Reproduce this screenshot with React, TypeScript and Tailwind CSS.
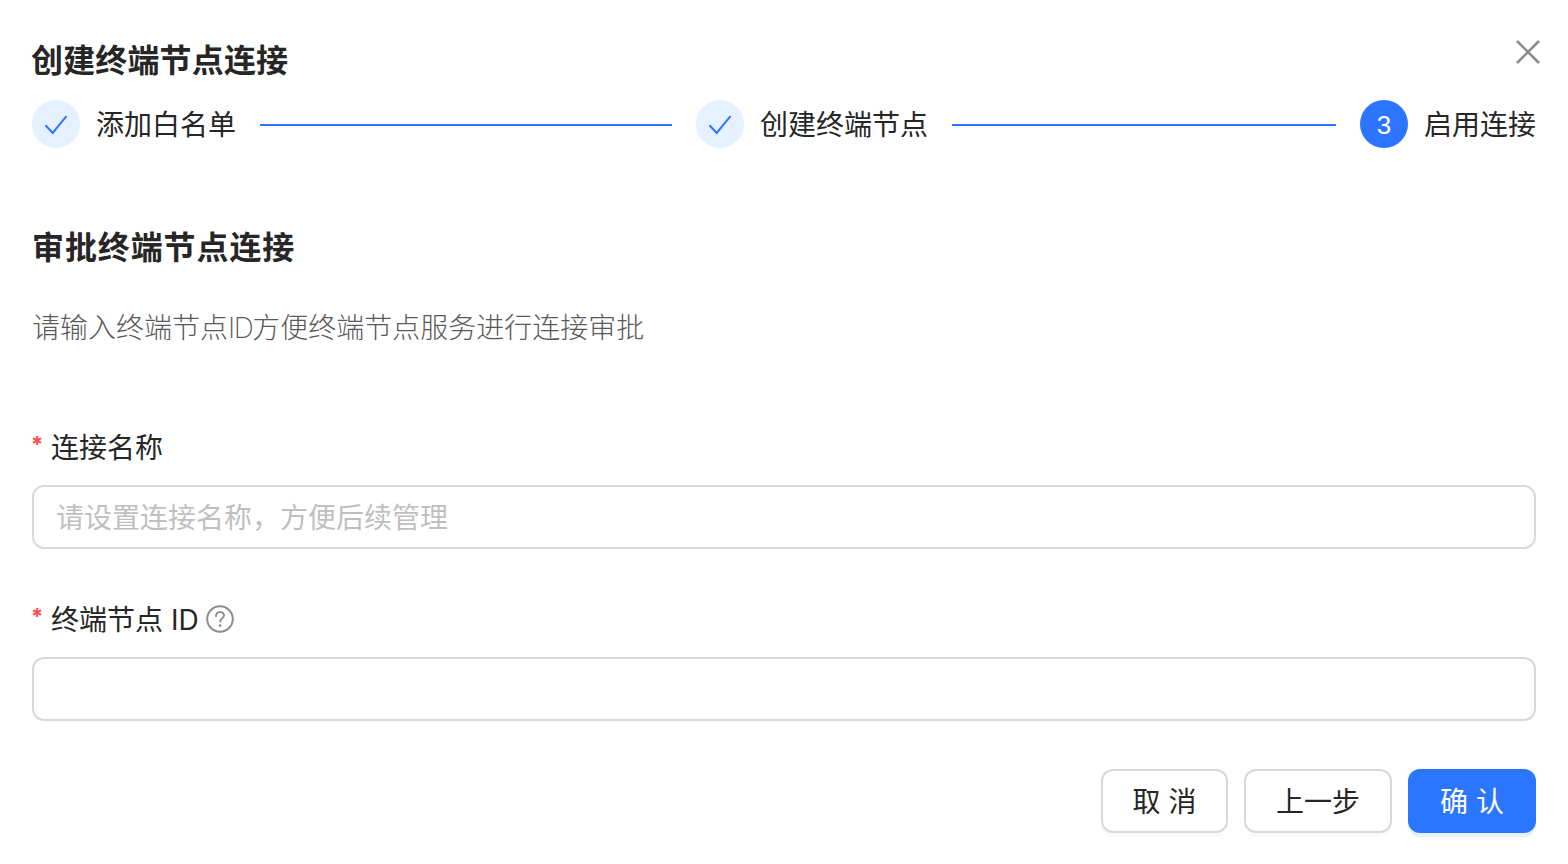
function Step({ label, done, num, last }: { label: string; done?: boolean; num?: number; last?: boolean }) {
  return (
    <div className={last ? "flex items-center" : "flex flex-1 items-center mr-6"}>
      <div
        className={
          done
            ? "w-12 h-12 rounded-full bg-[#e6f1ff]"
            : "w-12 h-12 rounded-full bg-[#2b75ff] flex items-center justify-center pt-0.5 text-white text-[26px] font-['Liberation_Sans',sans-serif]"
        }
      >
        {done ? (
          <svg width="48" height="48" viewBox="0 0 48 48" fill="none">
            <path d="M13.5 25.2 20.7 33 34.5 16.2" stroke="#2b75ff" strokeWidth="2" />
          </svg>
        ) : (
          num
        )}
      </div>
      <span className="ml-4 text-[28px] leading-[48px] pt-px text-[#262626] whitespace-nowrap">{label}</span>
      {!last && <div className="flex-1 h-0.5 mt-0.5 bg-[#2b75ff] ml-6" />}
    </div>
  );
}

function Field({ label, placeholder, help }: { label: string; placeholder?: string; help?: boolean }) {
  return (
    <div>
      <div className="flex items-center h-10 mb-[17px]">
        <span className="w-[19px] -ml-px mr-px text-[22px] leading-none text-[#ff4d4f] -mt-2 font-bold">*</span>
        <span className="text-[28px] leading-10 text-[#262626]">{label}</span>
        {help && (
          <svg width="28" height="28" viewBox="0 0 28 28" fill="none" className="ml-2 -translate-x-px -translate-y-px">
            <circle cx="14" cy="14" r="12.8" stroke="#8c8c8c" strokeWidth="2" />
            <path d="M10 11.2c0-2.4 1.8-4 4.1-4 2.2 0 3.9 1.4 3.9 3.4 0 2.8-3.9 3-3.9 5.9" stroke="#8c8c8c" strokeWidth="1.8" strokeLinecap="round" />
            <circle cx="14.1" cy="20.6" r="1.3" fill="#8c8c8c" />
          </svg>
        )}
      </div>
      <input
        placeholder={placeholder}
        className="block w-full h-16 rounded-xl border-2 border-[#d9d9d9] px-[22px] pt-0.5 text-[28px] outline-none placeholder:text-[#bfbfbf] bg-white"
      />
    </div>
  );
}

export default function App() {
  return (
    <div className="relative w-[1568px] h-[864px] bg-white px-8 overflow-hidden font-['Inter','Noto_Sans_CJK_SC',sans-serif]">
      <button className="absolute left-[1516px] top-10 text-[#8c8c8c]">
        <svg width="24" height="24" viewBox="0 0 24 24" fill="none" className="block">
          <path d="M1 1 23 23M23 1 1 23" stroke="currentColor" strokeWidth="2.6" />
        </svg>
      </button>

      <h1 className="pt-[37px] -ml-px h-[100px] text-[32px] leading-[48px] font-bold text-[#262626] tracking-[0.15px]">创建终端节点连接</h1>

      <div className="flex items-center h-12">
        <Step label="添加白名单" done />
        <Step label="创建终端节点" done />
        <Step label="启用连接" num={3} last />
      </div>

      <h2 className="mt-[76px] text-[32px] leading-12 font-bold text-[#262626] tracking-[0.9px]">审批终端节点连接</h2>
      <p className="mt-9 text-[28px] leading-10 text-[#595959] font-extralight">
        请输入终端节点<span className="tracking-[-1.5px]">ID</span>方便终端节点服务进行连接审批
      </p>

      <div className="mt-20 flex flex-col gap-[51px]">
        <Field label="连接名称" placeholder="请设置连接名称，方便后续管理" />
        <Field label="终端节点 ID" help />
      </div>

      <div className="flex justify-end gap-4 mt-12">
        <button className="w-[127px] h-16 rounded-xl border-2 border-[#d9d9d9] bg-white pt-0.5 text-[28px] text-[#262626] shadow-[0_4px_0_rgba(0,0,0,0.02)]">
          取 消
        </button>
        <button className="w-[148px] h-16 rounded-xl border-2 border-[#d9d9d9] bg-white pt-0.5 text-[28px] text-[#262626] shadow-[0_4px_0_rgba(0,0,0,0.02)]">
          上一步
        </button>
        <button className="w-32 h-16 rounded-xl bg-[#2b75ff] pt-0.5 text-[28px] text-white shadow-[0_4px_0_rgba(5,145,255,0.1)]">
          确 认
        </button>
      </div>
    </div>
  );
}
